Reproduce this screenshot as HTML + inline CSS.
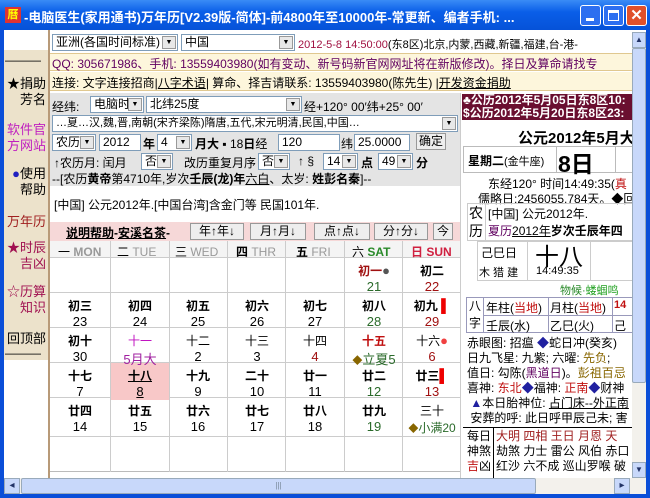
<!DOCTYPE html>
<html><head><meta charset="utf-8"><style>
*{margin:0;padding:0;box-sizing:border-box}
body{width:650px;height:498px;overflow:hidden;background:#0a4ed8;font-family:"Liberation Sans","Noto Sans CJK SC",sans-serif;font-size:12px;position:relative}
.a{position:absolute;white-space:nowrap}
.title{left:0;top:0;width:650px;height:30px;background:linear-gradient(#3a8cf6,#0a5ee8 40%,#0652d8);color:#fff;font-weight:bold;font-size:13px}
.tb{top:5px;width:21px;height:21px;border:1px solid #fff;border-radius:3px;background:#2d6ff0}
.sel{background:#fff;border:1px solid #7f9db9;height:17px;font-size:12px;line-height:15px;padding-left:3px}
.dd{position:absolute;right:1px;top:1px;width:14px;height:13px;background:#e8e8e8;border:1px solid #999;font-size:7px;text-align:center;line-height:11px}
.cell{position:absolute;text-align:center;width:58px;font-size:12px}
.cell b{display:block;font-size:12px;height:17px}
.cell span{display:block;font-size:13px}
.btn{background:#eee;border:1px solid #999;height:17px;font-size:12px;line-height:15px;text-align:center}
</style></head><body>
<div class="a title"><span class="a" style="left:5px;top:7px;width:16px;height:16px;background:#d33;color:#ff0;font-size:11px;line-height:16px;text-align:center">曆</span><span class="a" style="left:24px;top:7px">-电脑医生(家用通书)万年历[V2.39版-简体]-前4800年至10000年-常更新、编者手机: ...</span>
<div class="a tb" style="left:580px"><div class="a" style="left:5px;top:12px;width:8px;height:3px;background:#fff"></div></div>
<div class="a tb" style="left:603px"><div class="a" style="left:4px;top:4px;width:11px;height:11px;border:1px solid #fff;border-top-width:3px"></div></div>
<div class="a tb" style="left:626px;background:#e0502a;color:#fff;text-align:center;font-size:15px;line-height:19px">✕</div>
</div>
<div class="a" style="left:4px;top:30px;width:642px;height:464px;background:#fff"></div>
<!-- sidebar -->
<div class="a" style="left:4px;top:50px;width:44px;height:430px;background:#ece2cb"></div>
<div class="a" style="left:48px;top:30px;width:2px;height:448px;background:#b89a78"></div>
<div class="a" style="left:5px;top:52px;font-size:12px;line-height:16px;color:#000">———</div>
<div class="a" style="left:6px;top:76px;font-size:13px;line-height:16px;text-align:right;width:40px">★捐助<br>芳名</div>
<div class="a" style="left:6px;top:122px;font-size:13px;line-height:16px;text-align:right;width:40px;color:#c020c0">软件官<br>方网站</div>
<div class="a" style="left:6px;top:166px;font-size:13px;line-height:16px;text-align:right;width:40px;color:#000"><span style="color:#2020c0">●</span>使用<br>帮助</div>
<div class="a" style="left:6px;top:211px;font-size:13px;color:#a02020;text-align:right;width:40px">万年历</div>
<div class="a" style="left:6px;top:240px;font-size:13px;line-height:16px;text-align:right;width:40px;color:#a01050">★时辰<br>吉凶</div>
<div class="a" style="left:6px;top:284px;font-size:13px;line-height:16px;text-align:right;width:40px;color:#a01050">☆历算<br>知识</div>
<div class="a" style="left:6px;top:328px;font-size:13px;text-align:right;width:40px">回顶部</div>
<div class="a" style="left:5px;top:346px;font-size:12px">———</div>
<div class="a" style="left:4px;top:360px;width:44px;height:118px;background:#fff"></div>
<!-- top rows -->
<div class="a" style="left:50px;top:32px;width:582px;height:21px;background:#fff"></div>
<div class="a sel" style="left:52px;top:34px;width:126px">亚洲(各国时间标准)<div class="dd">▼</div></div>
<div class="a sel" style="left:181px;top:34px;width:114px">中国<div class="dd">▼</div></div>
<div class="a" style="left:298px;top:36px;font-size:11px;color:#a01040">2012-5-8 14:50:00<span style="color:#000">(东8区)北京,内蒙,西藏,新疆,福建,台-港-</span></div>
<div class="a" style="left:50px;top:53px;width:582px;height:18px;background:#fdf6dc;border-top:1px solid #e0c890;border-bottom:1px solid #e0c890"></div>
<div class="a" style="left:52px;top:55px;font-size:12px;color:#600060">QQ: 305671986、手机: 13559403980(如有变动、新号码新官网网址将在新版修改)。择日及算命请找专</div>
<div class="a" style="left:50px;top:72px;width:582px;height:19px;background:#fdf6dc;border-bottom:1px solid #e0c890"></div>
<div class="a" style="left:52px;top:74px;font-size:12px">连接: 文字连接招商|<u>八字术语</u>| 算命、择吉请联系: 13559403980(陈先生) |<u>开发资金捐助</u></div>
<!-- gray input block -->
<div class="a" style="left:50px;top:93px;width:410px;height:130px;background:#e4e4e4"></div>
<div class="a" style="left:52px;top:98px">经纬:</div>
<div class="a sel" style="left:90px;top:96px;width:54px">电脑时区<div class="dd">▼</div></div>
<div class="a sel" style="left:146px;top:96px;width:156px">北纬25度<div class="dd">▼</div></div>
<div class="a" style="left:304px;top:98px">经+120° 00′纬+25° 00′</div>
<div class="a sel" style="left:52px;top:115px;width:406px;font-size:11px">…夏…汉,魏,晋,南朝(宋齐梁陈)隋唐,五代,宋元明清,民国,中国…<div class="dd">▼</div></div>
<div class="a sel" style="left:52px;top:134px;width:44px">农历<div class="dd">▼</div></div>
<div class="a sel" style="left:99px;top:134px;width:42px">2012</div>
<div class="a" style="left:143px;top:135px;font-weight:bold">年</div>
<div class="a sel" style="left:157px;top:134px;width:35px">4<div class="dd">▼</div></div>
<div class="a" style="left:195px;top:135px"><b>月大</b> ▪ 18<b>日</b>经</div>
<div class="a sel" style="left:278px;top:134px;width:62px">120</div>
<div class="a" style="left:341px;top:135px">纬</div>
<div class="a sel" style="left:354px;top:134px;width:56px">25.0000</div>
<div class="a btn" style="left:416px;top:133px;width:30px">确定</div>
<div class="a" style="left:54px;top:154px">↑农历月: 闰月</div>
<div class="a sel" style="left:141px;top:153px;width:32px">否<div class="dd">▼</div></div>
<div class="a" style="left:184px;top:154px">改历重复月序</div>
<div class="a sel" style="left:258px;top:153px;width:32px">否<div class="dd">▼</div></div>
<div class="a" style="left:298px;top:154px">↑ § </div>
<div class="a sel" style="left:323px;top:153px;width:35px">14<div class="dd">▼</div></div>
<div class="a" style="left:361px;top:154px;font-weight:bold">点</div>
<div class="a sel" style="left:378px;top:153px;width:35px">49<div class="dd">▼</div></div>
<div class="a" style="left:416px;top:154px;font-weight:bold">分</div>
<div class="a" style="left:52px;top:170px">--[农历<b>黄帝</b>第4710年,岁次<b>壬辰(龙)年</b><u>六白</u>、太岁: <b>姓彭名秦</b>]--</div>
<div class="a" style="left:50px;top:186px;width:410px;height:36px;background:#fff"></div>
<div class="a" style="left:54px;top:196px">[中国] 公元2012年.[中国台湾]含金门等 民国101年.</div>
<!-- calendar header -->
<div class="a" style="left:50px;top:222px;width:410px;height:19px;background:#f6d8d8"></div>
<div class="a" style="left:66px;top:224px;font-weight:bold"><u>说明帮助</u>-<u>安溪名茶</u>-</div>
<div class="a btn" style="left:190px;top:223px;width:54px">年↑年↓</div>
<div class="a btn" style="left:250px;top:223px;width:56px">月↑月↓</div>
<div class="a btn" style="left:314px;top:223px;width:56px">点↑点↓</div>
<div class="a btn" style="left:374px;top:223px;width:54px">分↑分↓</div>
<div class="a btn" style="left:433px;top:223px;width:20px">今</div>
<div class="a" style="left:50px;top:241px;width:410px;height:17px;background:#f4f4f4;border-bottom:1px solid #ccc"></div>
<div class="a" style="left:58px;top:243px;font-size:12px;color:#999"><span style="color:#000">一</span> <b>MON</b></div>
<div class="a" style="left:117px;top:243px;color:#999"><span style="color:#000">二</span> TUE</div>
<div class="a" style="left:175px;top:243px;color:#999"><span style="color:#000">三</span> WED</div>
<div class="a" style="left:236px;top:243px;color:#999"><b style="color:#000">四</b> THR</div>
<div class="a" style="left:296px;top:243px;color:#999"><b style="color:#000">五</b> FRI</div>
<div class="a" style="left:352px;top:243px;color:#2a8a2a;font-weight:bold"><span style="color:#000;font-weight:normal">六</span> SAT</div>
<div class="a" style="left:411px;top:243px;color:#d02040;font-weight:bold">日 SUN</div>
<!-- grid lines -->
<div class="a" style="left:50px;top:258px;width:410px;height:214px;border-bottom:1px solid #bbb;
background:linear-gradient(#ccc,#ccc) 0 34px/100% 1px no-repeat,linear-gradient(#ccc,#ccc) 0 69px/100% 1px no-repeat,linear-gradient(#ccc,#ccc) 0 104px/100% 1px no-repeat,linear-gradient(#ccc,#ccc) 0 139px/100% 1px no-repeat,linear-gradient(#ccc,#ccc) 0 178px/100% 1px no-repeat"></div>
<div class="a" style="left:110px;top:241px;width:1px;height:231px;background:#ccc"></div>
<div class="a" style="left:169px;top:241px;width:1px;height:231px;background:#ccc"></div>
<div class="a" style="left:227px;top:241px;width:1px;height:231px;background:#ccc"></div>
<div class="a" style="left:285px;top:241px;width:1px;height:231px;background:#ccc"></div>
<div class="a" style="left:344px;top:241px;width:1px;height:231px;background:#ccc"></div>
<div class="a" style="left:402px;top:241px;width:1px;height:231px;background:#ccc"></div>
<div class="a" style="left:111px;top:363px;width:58px;height:37px;background:#f8c8c8"></div>
<div class="cell" style="left:345px;top:262px"><b style="color:#a01010">初一<span style="display:inline;color:#555">●</span></b><span style="color:#2a6a2a">21</span></div>
<div class="cell" style="left:403px;top:262px"><b>初二</b><span style="color:#a01010">22</span></div>
<div class="cell" style="left:51px;top:297px"><b>初三</b><span>23</span></div>
<div class="cell" style="left:111px;top:297px"><b>初四</b><span>24</span></div>
<div class="cell" style="left:169px;top:297px"><b>初五</b><span>25</span></div>
<div class="cell" style="left:228px;top:297px"><b>初六</b><span>26</span></div>
<div class="cell" style="left:286px;top:297px"><b>初七</b><span>27</span></div>
<div class="cell" style="left:345px;top:297px"><b>初八</b><span style="color:#2a6a2a">28</span></div>
<div class="cell" style="left:403px;top:297px"><b>初九 <span style="display:inline;color:#e00">▌</span></b><span style="color:#a01010">29</span></div>
<div class="cell" style="left:51px;top:332px"><b>初十</b><span>30</span></div>
<div class="cell" style="left:111px;top:332px"><b style="color:#c010c0;font-weight:normal">十一</b><span style="color:#a020a0">5月大</span></div>
<div class="cell" style="left:169px;top:332px"><b style="font-weight:normal">十二</b><span>2</span></div>
<div class="cell" style="left:228px;top:332px"><b style="font-weight:normal">十三</b><span>3</span></div>
<div class="cell" style="left:286px;top:332px"><b style="font-weight:normal">十四</b><span style="color:#a01010">4</span></div>
<div class="cell" style="left:345px;top:332px"><b style="color:#c01010">十五</b><span style="color:#2a6a2a"><span style="display:inline;color:#886600;font-size:10px">◆</span>立夏5</span></div>
<div class="cell" style="left:403px;top:332px"><b style="font-weight:normal">十六<span style="display:inline;color:#f04040">●</span></b><span style="color:#a01010">6</span></div>
<div class="cell" style="left:51px;top:367px"><b>十七</b><span>7</span></div>
<div class="cell" style="left:111px;top:367px"><b><u>十八</u></b><span><u>8</u></span></div>
<div class="cell" style="left:169px;top:367px"><b>十九</b><span>9</span></div>
<div class="cell" style="left:228px;top:367px"><b>二十</b><span>10</span></div>
<div class="cell" style="left:286px;top:367px"><b>廿一</b><span>11</span></div>
<div class="cell" style="left:345px;top:367px"><b>廿二</b><span style="color:#2a6a2a">12</span></div>
<div class="cell" style="left:403px;top:367px"><b>廿三<span style="display:inline;color:#e00">▌</span></b><span style="color:#a01010">13</span></div>
<div class="cell" style="left:51px;top:402px"><b>廿四</b><span>14</span></div>
<div class="cell" style="left:111px;top:402px"><b>廿五</b><span>15</span></div>
<div class="cell" style="left:169px;top:402px"><b>廿六</b><span>16</span></div>
<div class="cell" style="left:228px;top:402px"><b>廿七</b><span>17</span></div>
<div class="cell" style="left:286px;top:402px"><b>廿八</b><span>18</span></div>
<div class="cell" style="left:345px;top:402px"><b>廿九</b><span style="color:#2a6a2a">19</span></div>
<div class="cell" style="left:403px;top:402px"><b style="font-weight:normal">三十</b><span style="color:#2a6a2a;font-size:12px"><span style="display:inline;color:#886600;font-size:10px">◆</span>小满20</span></div>
<!-- right panel -->
<div class="a" style="left:460px;top:93px;width:172px;height:385px;background:#fff;border-left:1px solid #ccc"></div>
<div class="a" style="left:462px;top:94px;width:170px;height:26px;background:#6a0f30"></div>
<div class="a" style="left:463px;top:94px;color:#fff;font-weight:bold;font-size:12px;line-height:13px">♣公历2012年5月05日东8区10:<br>$公历2012年5月20日东8区23:</div>
<div class="a" style="left:518px;top:127px;font-size:15px;font-weight:bold">公元2012年5月大</div>
<div class="a" style="left:463px;top:146px;width:170px;height:27px;border:1px solid #bbb"></div>
<div class="a" style="left:556px;top:146px;width:1px;height:27px;background:#bbb"></div>
<div class="a" style="left:615px;top:146px;width:1px;height:27px;background:#bbb"></div>
<div class="a" style="left:468px;top:152px;font-weight:bold">星期二<span style="font-weight:normal;font-size:11px">(金牛座)</span></div>
<div class="a" style="left:558px;top:145px;font-size:23px;font-weight:bold">8日</div>
<div class="a" style="left:488px;top:175px;font-size:12px">东经120° 时间14:49:35(<span style="color:#c01010">真</span></div>
<div class="a" style="left:478px;top:190px;font-size:12px">儒略日:2456055.784天。◆回</div>
<div class="a" style="left:467px;top:203px;width:166px;height:38px;border:1px solid #ccc"></div>
<div class="a" style="left:485px;top:203px;width:1px;height:38px;background:#ccc"></div>
<div class="a" style="left:469px;top:204px;font-size:14px;line-height:18px">农<br>历</div>
<div class="a" style="left:488px;top:205px">[中国] 公元2012年.</div>
<div class="a" style="left:488px;top:222px"><span style="color:#600060">夏历</span><u>2012年</u><b>岁次壬辰年四</b></div>
<div class="a" style="left:477px;top:241px;width:156px;height:40px;border:1px solid #ccc"></div>
<div class="a" style="left:527px;top:241px;width:1px;height:40px;background:#ccc"></div>
<div class="a" style="left:590px;top:241px;width:1px;height:40px;background:#ccc"></div>
<div class="a" style="left:481px;top:244px">己巳日</div>
<div class="a" style="left:479px;top:264px;font-size:11px">木 猎 建</div>
<div class="a" style="left:535px;top:237px;font-size:24px">十八</div>
<div class="a" style="left:536px;top:265px;font-size:11px">14:49:35</div>
<div class="a" style="left:560px;top:282px;font-size:11px;color:#2a8a2a">物候·<span style="color:#20a020">蝼蝈鸣</span></div>
<div class="a" style="left:466px;top:297px;width:167px;height:36px;border:1px solid #99b;"></div>
<div class="a" style="left:483px;top:297px;width:1px;height:36px;background:#99b"></div>
<div class="a" style="left:548px;top:297px;width:1px;height:36px;background:#99b"></div>
<div class="a" style="left:612px;top:297px;width:1px;height:36px;background:#99b"></div>
<div class="a" style="left:483px;top:315px;width:150px;height:1px;background:#99b"></div>
<div class="a" style="left:469px;top:298px;line-height:17px">八<br>字</div>
<div class="a" style="left:486px;top:299px">年柱(<span style="color:#c01010">当地</span>)</div>
<div class="a" style="left:550px;top:299px">月柱(<span style="color:#c01010">当地</span>)</div>
<div class="a" style="left:614px;top:299px;color:#c01010;font-weight:bold;font-size:11px">14</div>
<div class="a" style="left:486px;top:317px">壬辰(水)</div>
<div class="a" style="left:550px;top:317px">乙巳(火)</div>
<div class="a" style="left:614px;top:317px">己</div>
<div class="a" style="left:467px;top:336px;line-height:15px;font-size:12px">赤眼图: 招瘟 <span style="color:#2020a0">◆</span>蛇日冲(癸亥)<br>日九飞星: 九紫; 六曜: <span style="color:#886600">先负</span>;<br>值日: 勾陈(<span style="color:#600060">黑道日</span>)。<span style="color:#886600">彭祖百忌</span><br>喜神: <span style="color:#c01010">东北</span><span style="color:#2020a0">◆</span>福神: <span style="color:#c01010">正南</span><span style="color:#2020a0">◆</span>财神<br>&nbsp;<span style="color:#2020a0">▲</span>本日胎神位: <u>占门床--外正南</u><br>&nbsp;安葬的呼: 此日呼甲辰己未; 害</div>
<div class="a" style="left:463px;top:427px;width:170px;height:51px;border-top:1px solid #000"></div>
<div class="a" style="left:493px;top:427px;width:1px;height:51px;background:#000"></div>
<div class="a" style="left:467px;top:429px;line-height:15px">每日<br>神煞<br><span style="color:#c01010">吉</span>凶</div>
<div class="a" style="left:496px;top:429px;line-height:15px"><span style="color:#a02020">大明 四相 王日 月恩 天</span><br>劫煞 力士 雷公 风伯 赤口<br>红沙 六不成 巡山罗喉 破</div>
<!-- vertical scrollbar -->
<div class="a" style="left:632px;top:32px;width:14px;height:446px;background:#f3f1ec"></div>
<div class="a" style="left:632px;top:32px;width:14px;height:16px;background:#c8d8fa;border:1px solid #9ab;font-size:8px;text-align:center;color:#236;line-height:14px">▲</div>
<div class="a" style="left:632px;top:48px;width:14px;height:335px;background:#c8d8fa;border:1px solid #9ab;border-radius:2px"></div>
<div class="a" style="left:632px;top:462px;width:14px;height:16px;background:#c8d8fa;border:1px solid #9ab;font-size:8px;text-align:center;color:#236;line-height:14px">▼</div>
<!-- horizontal scrollbar -->
<div class="a" style="left:4px;top:478px;width:642px;height:16px;background:#f3f1ec"></div>
<div class="a" style="left:4px;top:478px;width:16px;height:16px;background:#c8d8fa;border:1px solid #9ab;font-size:10px;text-align:center;color:#236;line-height:14px">◂</div>
<div class="a" style="left:21px;top:478px;width:515px;height:16px;background:#c8d8fa;border:1px solid #9ab;border-radius:2px;text-align:center;font-size:8px;line-height:14px;color:#789">|||</div>
<div class="a" style="left:614px;top:478px;width:16px;height:16px;background:#c8d8fa;border:1px solid #9ab;font-size:10px;text-align:center;color:#236;line-height:14px">▸</div>
</body></html>
